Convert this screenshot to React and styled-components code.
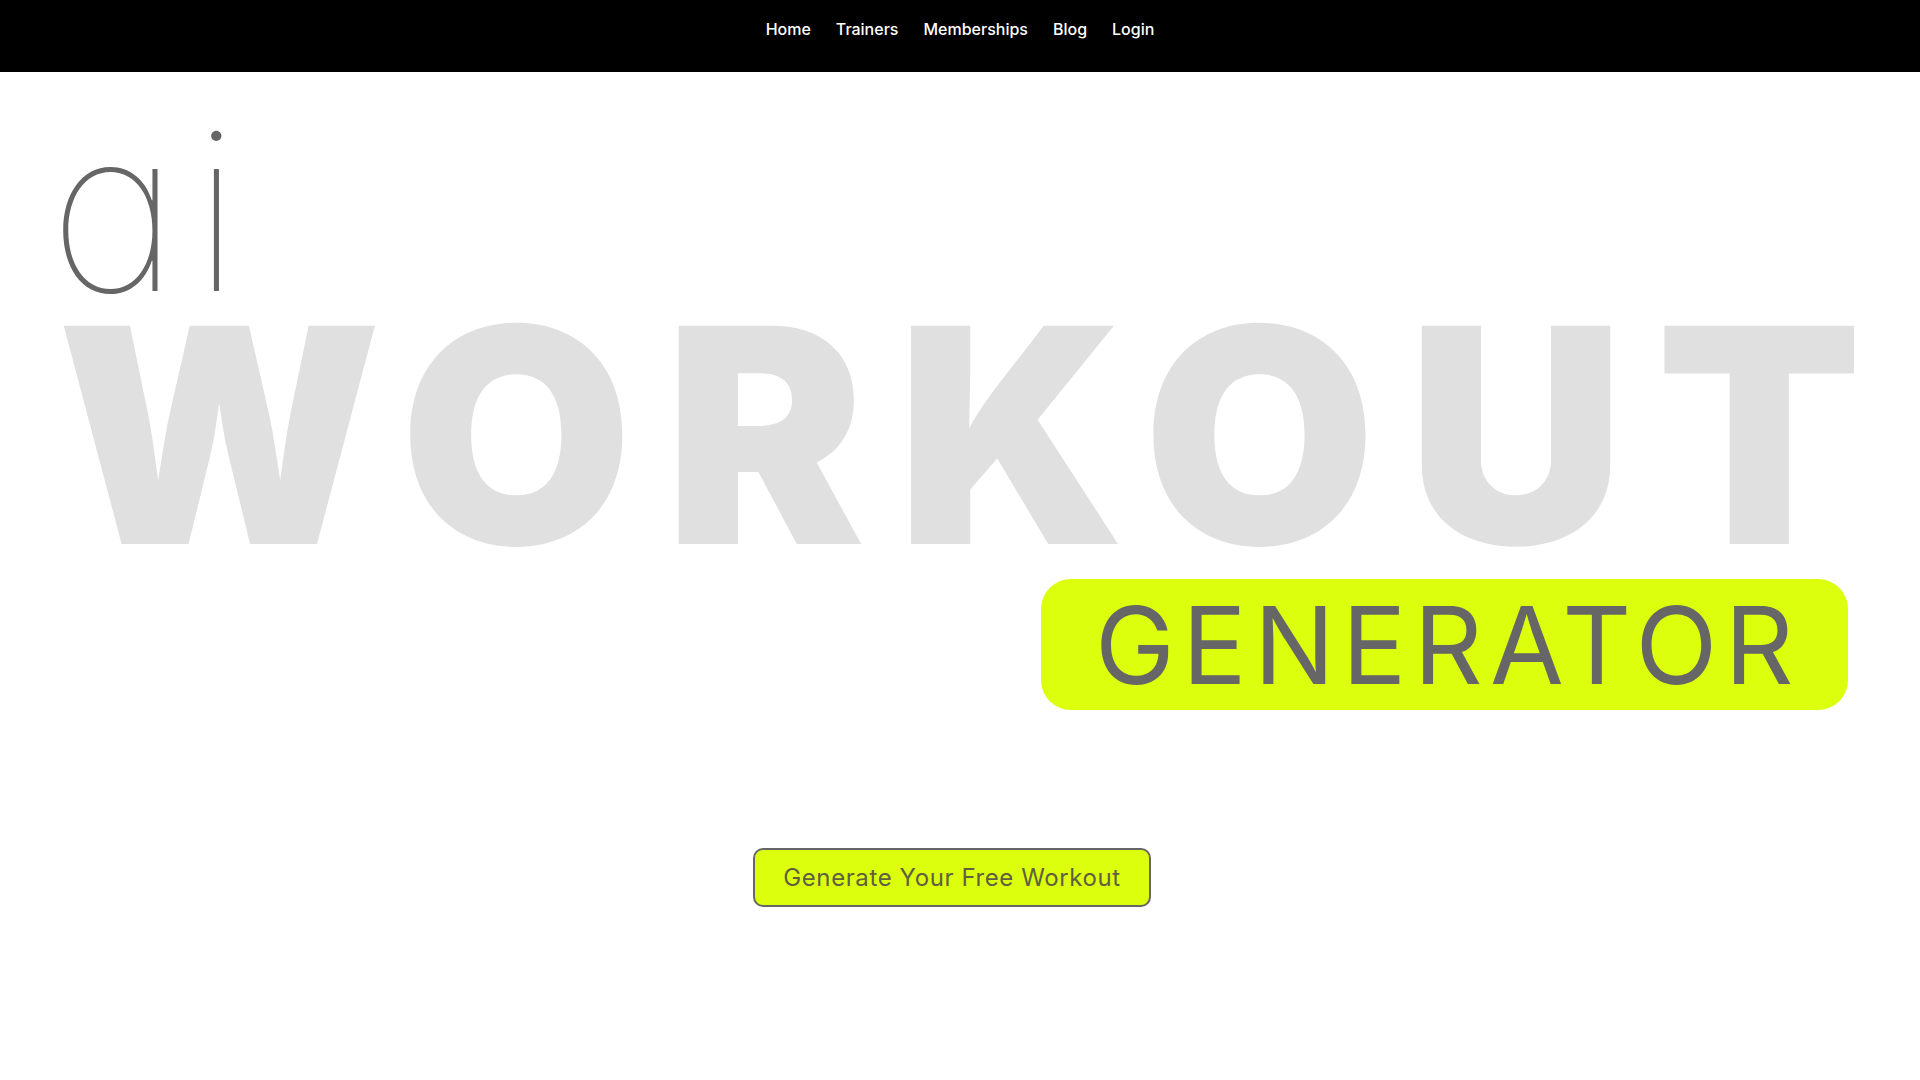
import React from 'react';
import styled, { createGlobalStyle } from 'styled-components';

const GlobalStyle = createGlobalStyle`
  html, body {
    margin: 0;
    padding: 0;
    background: #ffffff;
  }
  body {
    font-family: 'Inter', 'Open Sans', sans-serif;
  }
`;

const Header = styled.header`
  height: 72px;
  background: #000;
  display: flex;
  justify-content: center;
  align-items: flex-start;

  ul {
    display: flex;
    gap: 25px;
    list-style: none;
    margin: 0;
    padding: 17px 0 0;
  }

  li {
    color: #fff;
    font-family: 'Inter', sans-serif;
    font-size: 16px;
    font-weight: 500;
    line-height: 24px;
  }
`;

const Hero = styled.section`
  display: flex;
  flex-direction: column;
  padding: 0 62px 0 61px;
`;

const Ai = styled.div`
  font-family: 'Inter', sans-serif;
  font-weight: 100;
  font-size: 224px;
  line-height: 200px;
  height: 200px;
  margin: 38px 0 0 -12px;
  color: #666;
  font-feature-settings: 'cv11' 1;
  letter-spacing: 13px;
`;

const Big = styled.h1`
  margin: 0 0 0 -4px;
  font-family: 'Inter', sans-serif;
  font-weight: 900;
  font-size: 300px;
  line-height: 250px;
  color: #e0e0e0;
  letter-spacing: 32px;
  white-space: nowrap;
`;

const Pill = styled.div`
  align-self: flex-end;
  margin: 19px 10px 0 0;
  width: 807px;
  height: 131px;
  border-radius: 30px;
  background: #dcff0d;
  display: flex;
  align-items: center;
  justify-content: center;
  padding-left: 7px;
  box-sizing: border-box;
  font-family: 'Inter', sans-serif;
  font-weight: 400;
  font-size: 107px;
  letter-spacing: 7.4px;
  color: #666;
`;

const Cta = styled.div`
  display: flex;
  justify-content: center;
  padding: 138px 16px 0 0;
`;

const Button = styled.button`
  width: 398px;
  height: 59px;
  border: 2px solid #666;
  border-radius: 10px;
  background: #dcff0d;
  color: #5e6040;
  font-family: 'Inter', sans-serif;
  font-size: 24px;
  font-weight: 400;
  letter-spacing: 0.6px;
  cursor: pointer;
`;

export default function App() {
  return (
    <>
      <GlobalStyle />
      <Header>
        <nav>
          <ul>
            <li>Home</li>
            <li>Trainers</li>
            <li>Memberships</li>
            <li>Blog</li>
            <li>Login</li>
          </ul>
        </nav>
      </Header>
      <Hero>
        <Ai>ai</Ai>
        <Big>WORKOUT</Big>
        <Pill>GENERATOR</Pill>
      </Hero>
      <Cta>
        <Button>Generate Your Free Workout</Button>
      </Cta>
    </>
  );
}
